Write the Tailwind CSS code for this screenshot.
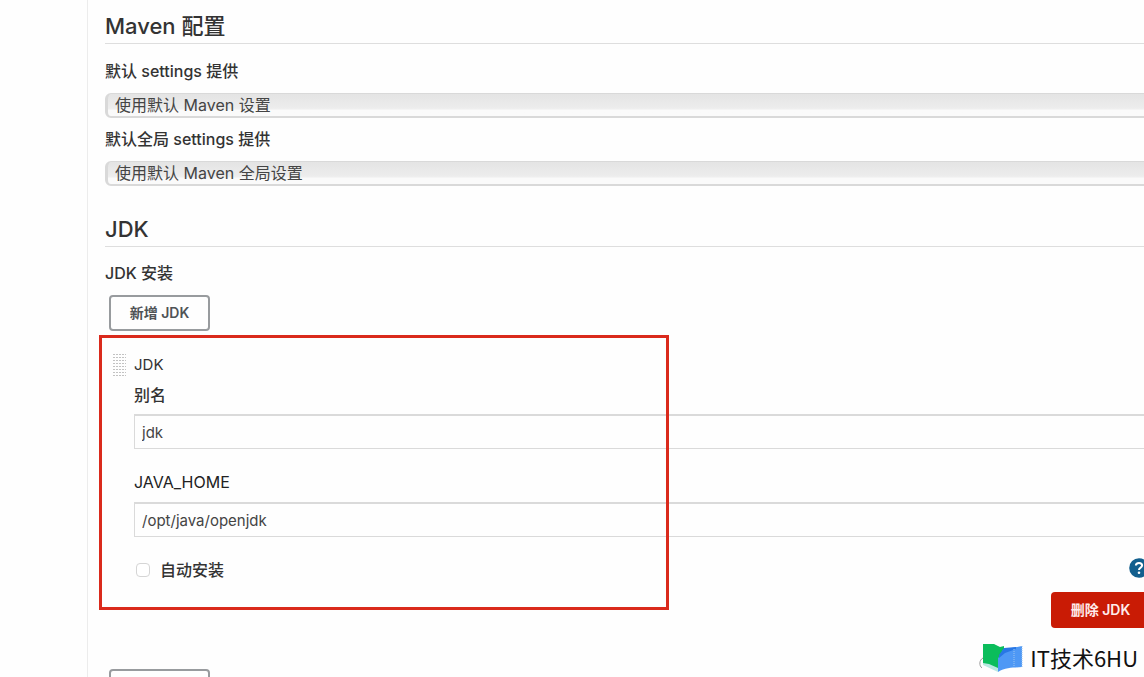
<!DOCTYPE html>
<html lang="zh-CN">
<head>
<meta charset="utf-8">
<meta name="viewport" content="width=device-width, initial-scale=1">
<title>Maven 配置</title>
<script src="https://cdn.jsdelivr.net/npm/@tailwindcss/browser@4"></script>
</head>
<body class="relative flex h-screen overflow-hidden bg-[#fefefe] font-['Inter','Noto_Sans_CJK_SC',sans-serif] text-base text-[#333]">
<aside class="w-22 shrink-0 border-r border-[#ececec]"></aside>
<main class="min-w-0 flex-1 pl-[17px]">
  <section>
    <h2 class="flex h-11 items-center border-b border-[#dedede] pt-2 text-[22px] font-medium leading-9">Maven 配置</h2>
    <label for="settings" class="mt-[15px] block h-6 text-base font-medium leading-6">默认 settings 提供</label>
    <select id="settings" class="-mr-4 mt-2.5 block h-[25px] w-[calc(100%+16px)] appearance-none rounded-md border border-b-2 border-l-3 border-[#d9d9d9] bg-linear-to-b from-[#e4e4e4] from-0% via-[#ededed] via-65% to-[#fafafa] to-75% pl-[7px] text-base leading-5 text-[#444]"><option>使用默认 Maven 设置</option></select>
    <label for="global" class="mt-[9px] block h-6 text-base font-medium leading-6">默认全局 settings 提供</label>
    <select id="global" class="-mr-4 mt-2.5 block h-[25px] w-[calc(100%+16px)] appearance-none rounded-md border border-b-2 border-l-3 border-[#d9d9d9] bg-linear-to-b from-[#e4e4e4] from-0% via-[#ededed] via-65% to-[#fafafa] to-75% pl-[7px] text-base leading-5 text-[#444]"><option>使用默认 Maven 全局设置</option></select>
  </section>
  <section class="mt-[21px]">
    <h2 class="flex h-10 items-center border-b border-[#dedede] pt-1 text-[22px] font-medium leading-9">JDK</h2>
    <h3 class="mt-3.5 h-6 text-base font-medium leading-6">JDK 安装</h3>
    <button type="button" class="ml-1 mt-2.5 block h-9 w-[101px] rounded border-2 border-[#989b9e] bg-[#fefefe] text-sm font-semibold text-[#4f5356]">新增 JDK</button>
    <div class="relative mt-5 pl-[29px]">
      <div class="pointer-events-none absolute -left-1.5 -top-4 h-[275px] w-[570px] border-3 border-[#da2a1c]"></div>
      <svg class="absolute left-2 top-0.5 h-6 w-3.5" viewBox="0 0 14 24" stroke="#c2c2c2" stroke-width="1" stroke-dasharray="2 1" aria-hidden="true"><path d="M0 1.5H13M0 4.5H13M0 7.5H13M0 10.5H13M0 13.5H13M0 16.5H13M0 19.5H13M0 22.5H13"/></svg>
      <p class="h-7 text-[15px] leading-7">JDK</p>
      <label for="name" class="mt-1 block h-6 text-base font-medium leading-6">别名</label>
      <input id="name" type="text" value="jdk" class="-mr-4 mt-[7px] block h-[35px] w-[calc(100%+16px)] border border-t-2 border-[#dadada] bg-[#fefefe] px-[7px] text-[15px] text-[#444]">
      <label for="home" class="mt-[21px] block h-6 text-base leading-6 text-[#222]">JAVA_HOME</label>
      <input id="home" type="text" value="/opt/java/openjdk" class="-mr-4 mt-2 block h-[35px] w-[calc(100%+16px)] border border-t-2 border-[#dadada] bg-[#fefefe] px-[7px] text-[15px] text-[#444]">
      <div class="-mr-[5px] mt-[21px] flex h-6 items-center">
        <input id="auto" type="checkbox" class="ml-0.5 size-3.5 appearance-none rounded border border-[#d5d5d5] bg-white">
        <label for="auto" class="ml-2.5 text-base font-medium leading-6">自动安装</label>
        <button type="button" aria-label="帮助" class="-mt-1 ml-auto"><svg class="size-5" viewBox="0 0 20 20" fill="none" aria-hidden="true"><circle cx="10" cy="10" r="9.8" fill="#125f8e"/><path d="M6.9 7.6C6.9 5.8 8.2 4.9 10 4.9S13.1 6 13.1 7.5C13.1 9.6 10 9.6 10 12" stroke="#fff" stroke-width="2"/><circle cx="10" cy="14.8" r="1.3" fill="#fff"/></svg></button>
      </div>
      <div class="-mr-4 mt-2.5 flex justify-end">
        <button type="button" class="h-9 w-[109px] rounded bg-[#c91b05] pr-2.5 text-sm font-semibold text-[#ffeceb]">删除 JDK</button>
      </div>
    </div>
    <button type="button" aria-label="新增 JDK" class="ml-1 mt-[41px] block h-9 w-[101px] rounded border-2 border-[#989b9e] bg-[#fefefe]"></button>
  </section>
</main>
<div class="absolute bottom-1 right-1.5 flex items-center gap-1.5 font-['Noto_Sans_CJK_SC',sans-serif] text-[22px] leading-7 text-[#111]">
  <svg class="h-8 w-[46px]" viewBox="0 0 46 32" fill="none" aria-hidden="true">
    <path d="M5 17C1 19 1 25 4 27" stroke="#999"/>
    <path d="M5 3H16L22 6L26 5V22L20 30L14 27L5 23Z" fill="#0bbd5b"/>
    <path d="M5 22L11 23L20 27V31L5 24Z" fill="#b9e8e0"/>
    <path d="M20 17C27 11 22 8 28 8L44 5V26C36 27 28 26 20 31Z" fill="#4e98f5"/>
    <path d="M26 7L38 6V8L27 12L21 17V14Z" fill="#2877e5"/>
    <path d="M36 8V26M44 5V26" stroke="#9bc4ee" stroke-dasharray="1 1"/>
  </svg>
  <span>IT技术6HU</span>
</div>
</body>
</html>
